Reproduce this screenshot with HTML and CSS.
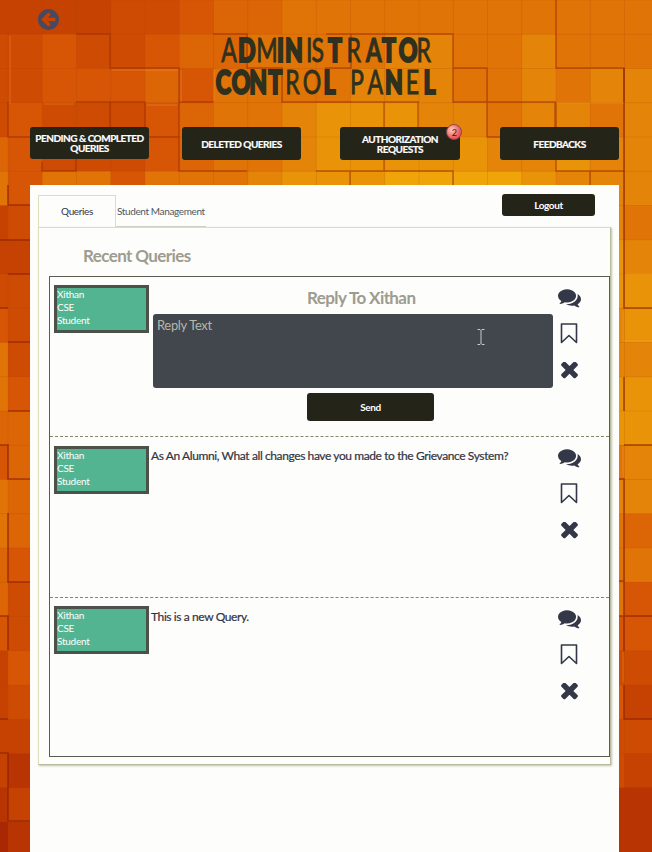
FILE: index.html
```
<!DOCTYPE html>
<html lang="en">
<head>
<meta charset="utf-8">
<title>Administrator Control Panel</title>
<link rel="stylesheet" href="styles.css">
</head>
<body>
<svg class="backdrop" id="backdrop" viewBox="0 0 652 852" aria-hidden="true"></svg>
<svg class="defs" aria-hidden="true">
  <symbol id="comments" viewBox="0 0 1792 1792"><path d="M1408 768q0 139-94 257t-256.500 186.500-353.500 68.500q-86 0-176-16-124 88-278 128-36 9-86 16h-3q-11 0-20.500-8t-11.500-21q-1-3-1-6.500t.5-6.500 2-6l2.500-5 3.500-5.500 4-5 4.500-5 4-4.500q5-6 23-25t26-29.500 22.500-29 25-38.500 20.500-44q-124-72-195-177t-71-224q0-139 94-257t256.500-186.500 353.500-68.500 353.500 68.500 256.500 186.500 94 257zm384 256q0 120-71 224.500t-195 176.500q10 24 20.500 44t25 38.500 22.500 29 26 29.500 23 25q1 1 4 4.500t4.500 5 4 5 3.500 5.500l2.500 5 2 6 .5 6.500-1 6.500q-3 14-13 22t-22 7q-50-7-86-16-154-40-278-128-90 16-176 16-271 0-472-132 58 4 88 4 161 0 309-45t264-129q125-92 192-212t67-254q0-77-23-152 129 71 204 178t75 230z"/></symbol>
  <symbol id="bookmark" viewBox="0 0 18 21"><path d="M1.500 1h15v18.500L9 12.500l-7.500 7z" fill="none" stroke="currentColor" stroke-width="1.600" stroke-linejoin="round"/></symbol>
  <symbol id="times" viewBox="296 296 1200 1200"><path d="M1490 1216q0 40-28 68l-136 136q-28 28-68 28t-68-28l-294-294-294 294q-28 28-68 28t-68-28l-136-136q-28-28-28-68t28-68l294-294-294-294q-28-28-28-68t28-68l136-136q28-28 68-28t68 28l294 294 294-294q28-28 68-28t68 28l136 136q28 28 28 68t-28 68l-294 294 294 294q28 28 28 68z"/></symbol>
</svg>

<header class="header">
  <a class="back" aria-label="Back"><svg viewBox="128 128 1536 1536"><path d="M1408 960v-128q0-26-19-45t-45-19h-502l189-189q19-19 19-45t-19-45l-91-91q-18-18-45-18t-45 18l-362 362-91 91q-18 18-18 45t18 45l91 91 362 362q18 18 45 18t45-18l91-91q18-18 18-45t-18-45l-189-189h502q26 0 45-19t19-45zm256-64q0 209-103 385.500t-279.500 279.500-385.500 103-385.500-103-279.500-279.500-103-385.500 103-385.500 279.500-279.500 385.500-103 385.500 103 279.500 279.500 103 385.500z"/></svg></a>
  <h1 class="title">
    <svg viewBox="0 0 230 62">
      <g transform="scale(.7 1)">
        <text y="27" x="9 33 59 88.500 100 130 138 161.500 188 215.500 238.500 262.500 288">A<tspan class="heavy">D</tspan>M<tspan class="heavy">IN</tspan>IS<tspan class="heavy">T</tspan>R<tspan class="semi">A</tspan><tspan class="heavy">TO</tspan>R</text>
        <text y="59" x="1 24 49 76 100.500 125.500 155 185 193 218 243 272.500 298"><tspan class="heavy">CONT</tspan>RO<tspan class="heavy">L</tspan> PA<tspan class="heavy">N</tspan>E<tspan class="heavy">L</tspan></text>
      </g>
    </svg>
  </h1>
  <nav class="nav">
    <a class="btn first">PENDING &amp; COMPLETED<br>QUERIES</a>
    <a class="btn">DELETED QUERIES</a>
    <a class="btn requests">AUTHORIZATION<br>REQUESTS<span class="count">2</span></a>
    <a class="btn">FEEDBACKS</a>
  </nav>
</header>

<main class="panel">
  <div class="tabs">
    <a class="tab active">Queries</a>
    <a class="tab other">Student Management</a>
    <a class="btn logout">Logout</a>
  </div>
  <section class="content">
    <h2 class="heading">Recent Queries</h2>
    <div class="list">
      <article class="query">
        <div class="who">Xithan<br>CSE<br>Student</div>
        <div class="reply">
          <h3 class="reply-title">Reply To Xithan</h3>
          <div class="field">Reply Text<svg class="caret" viewBox="0 0 8 16"><path d="M.5.5h2.500l1 1 1-1h2.500M4 1.500v13M.5 15.500h2.500l1-1 1 1h2.500"/></svg></div>
          <a class="btn send">Send</a>
        </div>
        <div class="actions"><svg class="i-comments"><use href="#comments"/></svg><svg class="i-bookmark"><use href="#bookmark"/></svg><svg class="i-times"><use href="#times"/></svg></div>
      </article>
      <article class="query">
        <div class="who">Xithan<br>CSE<br>Student</div>
        <p class="text">As An Alumni, What all changes have you made to the Grievance System?</p>
        <div class="actions"><svg class="i-comments"><use href="#comments"/></svg><svg class="i-bookmark"><use href="#bookmark"/></svg><svg class="i-times"><use href="#times"/></svg></div>
      </article>
      <article class="query">
        <div class="who">Xithan<br>CSE<br>Student</div>
        <p class="text">This is a new Query.</p>
        <div class="actions"><svg class="i-comments"><use href="#comments"/></svg><svg class="i-bookmark"><use href="#bookmark"/></svg><svg class="i-times"><use href="#times"/></svg></div>
      </article>
    </div>
  </section>
</main>
<script src="backdrop.js"></script>
</body>
</html>
```
FILE: styles.css
```
* { box-sizing: border-box; }
html, body { height: 100%; overflow: hidden; }
body { margin: 0; font-family: Lato, "Liberation Sans", sans-serif; color: #33333f; background: #dc6506; display: flex; flex-direction: column; }
h1, h2, h3, p { margin: 0; }
.backdrop { position: absolute; left: 0; top: 0; width: 652px; height: 852px; z-index: -1; }
.defs { display: none; }
.header { height: 185px; flex: none; display: flex; flex-direction: column; padding: 9px 33px 0 30px; }
.back { height: 26px; padding-left: 8px; }
.back svg { width: 21px; height: 21px; fill: #454a62; display: block; }
.title { height: 62px; margin-left: 185px; line-height: 0; }
.title svg { width: 230px; height: 62px; overflow: visible; }
.title text { font: 400 33px Lato, sans-serif; fill: #30301f; stroke: #30301f; stroke-width: .9px; }
.title .semi { font-weight: 700; }
.title .heavy { font-weight: 900; stroke-width: 2.2px; }
.nav { display: grid; grid-template-columns: 119px 119px 120px 119px; column-gap: 33px; margin-top: 30px; width: 589px; }
.nav .requests { margin-left: 6px; width: 120px; }
.nav .btn:last-child { margin-left: 13px; }
.btn { background: #242419; color: #fff; border-radius: 3px; font-weight: 700; font-size: 10px; line-height: 10px; letter-spacing: -.4px; text-align: center; display: flex; align-items: center; justify-content: center; white-space: nowrap; }
.nav .btn { width: 119px; height: 33px; position: relative; letter-spacing: -.5px; -webkit-text-stroke: .2px #fff; }
.nav .btn.requests { width: 120px; }
.nav .btn.first { height: 32px; }
.nav .count { -webkit-text-stroke: 0; position: absolute; right: -2px; top: -3px; width: 16px; height: 16px; border-radius: 50%; border: 1px solid #8a4a48; background: radial-gradient(circle at 35% 35%, #ffd0c0, #f26468 55%, #d83c4c); color: #321; font-size: 9px; font-weight: 400; line-height: 15px; }
.panel { width: 589px; margin-left: 30px; flex: 1; background: #fdfdfb; padding: 10px 8px; }
.tabs { height: 32px; display: flex; font-size: 10px; line-height: 32px; letter-spacing: -.38px; }
.active { width: 78px; border: 1px solid #dedebc; border-bottom: 0; text-align: center; line-height: 31px; }
.other { width: 90px; padding-left: 1px; border-bottom: 1px solid #cfcfc6; color: #4a5965; white-space: nowrap; }
.logout { width: 93px; height: 22px; margin: -1px 16px 0 auto; }
.content { height: 538px; width: 573px; border: 1px solid #dedebc; border-right-color: #b8bc9c; border-bottom-color: #b8bc9c; box-shadow: 1px 1px 2px #bfc2a8; padding-left: 10px; }
.heading { height: 48px; padding: 18px 0 0 34px; font-size: 17px; line-height: 20px; color: #9c9c90; letter-spacing: -.6px; }
.list { width: 561px; height: 481px; border: 1px solid #5b5b50; }
.query { height: 161px; display: flex; padding: 8px 0 0 4px; border-bottom: 1px dashed #85856d; }
.query:first-child { height: 160px; }
.query:last-child { border: 0; height: 158px; }
.who { width: 95px; height: 48px; flex: none; background: #52b491; border: 3px solid #4c514a; color: #fff; font-size: 10px; line-height: 13px; letter-spacing: -.25px; }
.query + .query .who { margin-top: 1px; }
.query:last-child .who { margin-top: 0; }
.text { flex: 1; font-size: 12px; line-height: 16px; padding: 3px 0 0 2px; letter-spacing: -.4px; -webkit-text-stroke: .2px #33333f; white-space: nowrap; }
.reply { width: 404px; padding-left: 4px; }
.reply-title { height: 29px; font-size: 17px; line-height: 26px; color: #9c9c90; padding-left: 154px; letter-spacing: -.6px; }
.field { position: relative; height: 74px; width: 400px; border-radius: 3px; background: #42464d; color: #b5b7a9; font-size: 13px; line-height: 22px; padding-left: 4px; letter-spacing: -.35px; }
.caret { position: absolute; left: 324px; top: 15px; width: 8px; height: 16px; fill: none; stroke: #c8cbd2; stroke-width: 1px; }
.send { width: 127px; height: 28px; margin: 5px 0 0 154px; }
.actions { width: 24px; margin-left: auto; margin-right: 28px; display: flex; flex-direction: column; align-items: center; color: #343747; fill: currentColor; }
.i-comments { width: 23px; height: 23px; margin-top: 1px; }
.i-bookmark { width: 18px; height: 21px; margin-top: 14px; }
.i-times { width: 17px; height: 17px; margin: 18px 0 0 1px; }
```
FILE: backdrop.js
```
// Block wall: one digit per tile, from dark red (0) to amber (9).
const palette = ['#aa2703', '#b93403', '#c54203', '#ce4b04', '#d75606', '#dc6506', '#e17407', '#e48408', '#e99408', '#efa40a'];
const rows = [
  '22223345566666666666', '33433455666677667666', '33444546666777667677', '34333456678887767767',
  '54333456678888877877', '64664666788899998777', '23000000000000000076', '22000000000000000087',
  '33000000000000000088', '43000000000000000078', '63000000000000000077', '64000000000000000088',
  '55000000000000000088', '45000000000000000067', '65000000000000000077', '65000000000000000065',
  '54000000000000000066', '53000000000000000064', '43000000000000000044', '24000000000000000033',
  '23000000000000000042', '22000000000000000033', '21000000000000000032', '12000000000000000011', '01000000000000000011'
];
const ns = 'http://www.w3.org/2000/svg';
const root = document.getElementById('backdrop');
const add = (name, attrs) => {
  const el = document.createElementNS(ns, name);
  for (const k in attrs) el.setAttribute(k, attrs[k]);
  root.appendChild(el);
};
const P = 34.25;
rows.forEach((row, j) => [...row].forEach((d, i) => {
  add('rect', { x: 8 + (i - 1) * P, y: j * P, width: P + .5, height: P + .5, fill: palette[d], stroke: '#a64400', 'stroke-opacity': .15 });
}));
// Shadowed block edges, and light edges on the raised sides.
add('path', { d: 'M76 34h34v34h69v34h34M76 102h69v35M110 102v35M8 102v35h34M145 137h34M179 68v103h68M42 162v9h34v-34M213 34h34v34h35v34h137M282 68v34M351 34v34h-26M326 34h127v34h34v69h34M384 102v35M384 102h34v35M384 137v34h-33M316 171h34v14M384 137v34h69v14M453 68v34h102v35M556 0v68h68v34M556 102v69h68M590 171v14', fill: 'none', stroke: '#9e2d00', 'stroke-opacity': .6, 'stroke-width': 1.4 });
add('path', { d: 'M8 185v20h22M0 240h30M8 274h22M0 308h8M8 342h22M8 411h22M0 445h8v34h22M8 513v69h22M0 616h8v34M0 719h8M0 753h8v68h22M624 68v172M624 240v68h28M624 377v34M624 445h28M619 479h5v102M619 581h5v70M619 616h33M624 685v34h28', fill: 'none', stroke: '#8d2100', 'stroke-opacity': .7, 'stroke-width': 1.6 });
add('path', { d: 'M10 36v68M112 70h66M181 70v32M214 70v30M44 104h30M147 105h30M420 36v32M556 103h68M626 274h26M623 311v30h29M623 447v30M623 652v30', fill: 'none', stroke: '#ffb24c', 'stroke-opacity': .3, 'stroke-width': 1 });
```
